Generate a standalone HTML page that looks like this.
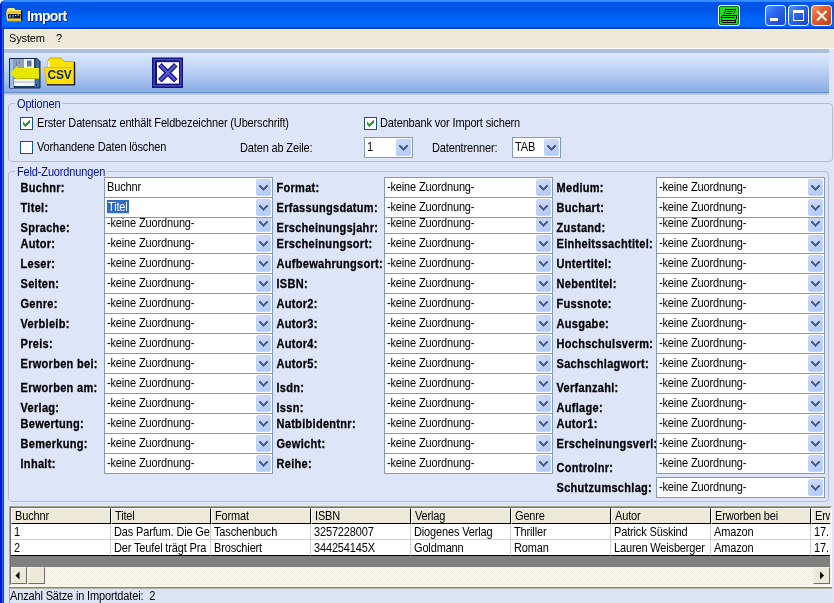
<!DOCTYPE html>
<html><head><meta charset="utf-8">
<style>
*{margin:0;padding:0;box-sizing:border-box}
body{will-change:transform}
html,body{width:834px;height:603px;overflow:hidden;background:#DEE5F9;font-family:"Liberation Sans",sans-serif;font-size:11px;color:#000;position:relative}
.abs{position:absolute}
#title{position:absolute;left:0;top:0;width:834px;height:29px;
 background:linear-gradient(180deg,#3D95FF 0px,#2D88FB 1.5px,#0058EE 2.5px,#0053E4 6px,#0056EA 12px,#0064FA 18px,#0068FF 24px,#0066FC 27px,#0038C8 28px,#0030B8 29px);border-top-left-radius:5px}
#ttext{position:absolute;left:27px;top:8px;font-size:14px;font-weight:bold;color:#fff;text-shadow:1px 1px 0 #0A1E8A;letter-spacing:-0.7px}
#lframe{position:absolute;left:0;top:29px;width:5px;height:574px;background:linear-gradient(90deg,#0012CC 0,#0018D4 1.5px,#2A6AF4 2px,#2262F0 2.6px,#1448CC 3.2px,#1448CC 4px,#D4E8FC 4px)}
#menu{position:absolute;left:4px;top:29px;width:830px;height:19px;background:#ECE9D8;border-top:1px solid #F4F2EA}
#menu span{position:absolute;top:2px;line-height:13px;letter-spacing:-0.15px}
#mline{position:absolute;left:4px;top:48px;width:830px;height:1px;background:#FAFAFA}
#tband{position:absolute;left:4px;top:49px;width:825px;height:4px;background:#AEBFDA}
#toolbar{position:absolute;left:4px;top:53px;width:825px;height:39px;background:linear-gradient(180deg,#DCE8FB 0px,#C7D9F7 12px,#A9C4EF 26px,#86ABE3 39px)}
#tbline{position:absolute;left:4px;top:92px;width:825px;height:1px;background:#6A92CB}
#tbline2{position:absolute;left:4px;top:93px;width:825px;height:1px;background:#A6BEE5}
#tbline3{position:absolute;left:4px;top:94px;width:825px;height:1px;background:#BFCADC}
#tbright{position:absolute;left:829px;top:49px;width:5px;height:46px;background:#DEE5F9}
.grp{position:absolute;border:1px solid #B8BCC6;border-radius:4px}
.gcap{position:absolute;color:#0010A0;background:#DEE5F9;padding:0 2px 0 2px;letter-spacing:-0.15px;line-height:13px;transform:scaleY(1.1);transform-origin:0 10px}
.n{position:absolute;white-space:nowrap;letter-spacing:-0.15px;line-height:13px;transform:scaleY(1.1);transform-origin:0 10px}
.chk{position:absolute;width:13px;height:13px;border:1px solid #1C5180;background:#FDFDFB}
.chk svg{position:absolute;left:0;top:0}
.lb{position:absolute;font-weight:bold;-webkit-text-stroke:0.25px #000;white-space:nowrap;letter-spacing:0.3px;line-height:13px;transform:scaleY(1.1);transform-origin:0 10px}
.cb{position:absolute;height:21px;border:1px solid #7F9DB9;background:#fff}
.ct{position:absolute;left:2px;top:3px;white-space:nowrap;letter-spacing:-0.15px;line-height:13px;transform:scaleY(1.1);transform-origin:0 10px}
.sel{background:#316AC5;color:#fff;padding:0 1px}
.bt{position:absolute;right:1px;top:1px;width:15px;height:17px;border-radius:2px;background:linear-gradient(160deg,#D2DDF6 0%,#C0D2F6 45%,#AFCBFA 100%);border:1px solid #C2D2F2}
.bt svg{position:absolute;left:2px;top:5px}
#grid{position:absolute;left:9px;top:506px;width:823px;height:80px;border-top:1px solid #ACA899;border-left:1px solid #ACA899;border-bottom:1px solid #fff;border-right:1px solid #fff;background:#808080;overflow:hidden}
#gin{position:absolute;left:0;top:0;right:0;bottom:0;border-top:1px solid #716F64;border-left:1px solid #716F64;border-bottom:1px solid #F1EFE2;border-right:1px solid #F1EFE2;overflow:hidden}
.gh{position:absolute;top:0;height:16px;background:#ECE9D8;border-left:1px solid #fff;border-top:1px solid #fff;border-right:1px solid #000;border-bottom:1px solid #000;overflow:hidden}
.gh span{position:absolute;left:3px;top:1px;white-space:nowrap;letter-spacing:-0.15px;line-height:13px;transform:scaleY(1.1);transform-origin:0 10px}
.gc span{position:absolute;left:3px;top:2px;white-space:nowrap;letter-spacing:-0.15px;line-height:13px;transform:scaleY(1.1);transform-origin:0 10px}
.gc{position:absolute;height:16px;background:#fff;border-right:1px solid #D4D0C8;border-bottom:1px solid #D4D0C8;overflow:hidden}
#hs{position:absolute;left:0;top:59px;width:819px;height:17px;background:repeating-conic-gradient(#FFFFFF 0 25%,#EAE8DC 0 50%) 0 0/2px 2px}
.sbb{position:absolute;top:0;width:16px;height:17px;background:#ECE9D8;border-left:1px solid #F1EFE2;border-top:1px solid #F1EFE2;border-right:1px solid #716F64;border-bottom:1px solid #716F64}
#sband{position:absolute;left:9px;top:586px;width:823px;height:1px;background:#F4F2E8}
#status{position:absolute;left:9px;top:587px;width:823px;height:16px;border-top:2px solid #8A887A;border-left:1px solid #ACA899;background:#DCE4F6}
#status:before{content:"";position:absolute;left:0;right:0;top:-1px;height:1px;background:#B4B2A6}
</style></head><body>
<div class="abs" style="left:0;top:0;width:6px;height:6px;background:#E8ECF4"></div>
<div id="title"></div>
<div class="abs" style="left:0;top:4px;width:2px;height:25px;background:linear-gradient(90deg,#0818B8,#0A2ED0)"></div>
<svg class="abs" style="left:0;top:0" width="30" height="30" viewBox="0 0 30 30">
 <path d="M6.5 12 L7.5 9 Q8 8 9 8 L14 8 L15.5 10 L21 10 L21 12Z" fill="#FFE86A"/>
 <rect x="7" y="9" width="1.5" height="3" fill="#FFFFFF"/>
 <path d="M6 11.5 L21 11.5 L21 21 L7 21 Z" fill="#F8DC30"/>
 <rect x="6" y="11.5" width="15" height="1" fill="#D8A818"/>
 <rect x="21" y="11" width="1.2" height="10.5" fill="#000"/>
 <rect x="7" y="20.5" width="15" height="1" fill="#C89810"/>
 <rect x="8" y="14" width="12.5" height="4.5" fill="#101A40"/>
 <rect x="9.5" y="15" width="1" height="2.5" fill="#E8F0FF"/>
 <rect x="12.5" y="15" width="1" height="1" fill="#E8F0FF"/>
 <rect x="12.5" y="16.5" width="1" height="1" fill="#E8F0FF"/>
 <rect x="15" y="15" width="1.2" height="1" fill="#F8F0A0"/>
 <rect x="17.5" y="14.5" width="1.5" height="1" fill="#F8F0A0"/>
</svg>
<div id="ttext">Import</div>
<svg class="abs" style="left:0;top:0" width="834" height="30" viewBox="0 0 834 30">
 <rect x="718" y="5" width="22" height="21" rx="3" fill="#fff"/>
 <rect x="719" y="6" width="20" height="19" rx="2" fill="#0B6A0B"/>
 <rect x="720" y="7" width="18" height="17" rx="1" fill="#18E018"/>
 <path d="M725 9h11v1h-11zM725 10h1v1h-1zM725 11h1v1h-1zM724 12h1v1h-1zM724 13h1v1h-1zM735 10h1v1h-1zM734 11h1v1h-1zM734 12h1v1h-1zM733 13h1v1h-1zM727 11h6v1h-6zM726 13h6v1h-6zM722 15h15v1h-15zM721 16h1v6h-1zM722 17h13v1h-13zM722 20h13v1h-13zM722 22h14v1h-14zM736 16h1v3h-1zM735 19h1v1h-1zM735 20h1v1h-1zM735 21h1v1h-1z" fill="#000" shape-rendering="crispEdges"/>
 <rect x="735" y="17" width="1" height="1" fill="#18E018"/>
 <defs>
  <linearGradient id="bb" x1="0" y1="0" x2="1" y2="1"><stop offset="0" stop-color="#5A9AFF"/><stop offset="0.35" stop-color="#2E6AF0"/><stop offset="1" stop-color="#1A46C8"/></linearGradient>
  <linearGradient id="rb" x1="0" y1="0" x2="1" y2="1"><stop offset="0" stop-color="#F4986A"/><stop offset="0.4" stop-color="#E0602E"/><stop offset="1" stop-color="#C0401A"/></linearGradient>
 </defs>
 <rect x="765.5" y="5.5" width="20" height="20" rx="3" fill="url(#bb)" stroke="#fff" stroke-width="1"/>
 <rect x="770" y="18" width="8" height="3" fill="#fff"/>
 <rect x="788.5" y="5.5" width="20" height="20" rx="3" fill="url(#bb)" stroke="#fff" stroke-width="1"/>
 <rect x="793" y="10" width="11" height="3" fill="#fff"/>
 <rect x="793.5" y="12.5" width="10" height="8" fill="none" stroke="#fff" stroke-width="1"/>
 <rect x="811.5" y="5.5" width="20" height="20" rx="3" fill="url(#rb)" stroke="#fff" stroke-width="1"/>
 <path d="M817 11 L826.5 20.5 M826.5 11 L817 20.5" stroke="#fff" stroke-width="2.1"/>
</svg>
<div id="lframe"></div>
<div id="menu"><span style="left:5px">System</span><span style="left:52px">?</span></div>
<div id="mline"></div>
<div id="tband"></div>
<div id="toolbar"></div>
<div id="tbline"></div><div id="tbline2"></div><div id="tbline3"></div>

<!-- toolbar icons -->
<svg class="abs" style="left:0;top:50px" width="200" height="45" viewBox="0 50 200 45">
 <!-- floppy at 9,58 size 31x30 -->
 <path d="M9.5 58.5 L37 58.5 L40 61.5 L40 88 L9.5 88Z" fill="#3D6C9C" stroke="#16264A" stroke-width="1"/>
 <rect x="10" y="59" width="3.5" height="29" fill="#9EC0E2"/>
 <rect x="13.5" y="59" width="10.5" height="9.5" fill="#8DA3BD"/>
 <rect x="16" y="61" width="1" height="5" fill="#6A7E98"/><rect x="19" y="61" width="1" height="3" fill="#6A7E98"/>
 <rect x="24" y="59" width="10" height="9.5" fill="#F2F2F2"/>
 <rect x="27" y="60.5" width="4.5" height="6" fill="#5A7898"/>
 <rect x="34" y="59" width="2" height="9.5" fill="#2C4A70"/>
 <rect x="14" y="79" width="20.5" height="7" fill="#F4F6F8"/>
 <rect x="14" y="81.5" width="20.5" height="1" fill="#A8B4C4"/>
 <rect x="14" y="86" width="20.5" height="2" fill="#1E3A60"/>
 <rect x="36" y="84" width="1" height="2" fill="#102040"/>
 <path d="M10 73 L17.5 65.5 L17.5 68 L39 68 L39 78.5 L17.5 78.5 L17.5 81 Z" fill="#E6E600"/>
 <path d="M17.5 78.5 L39 78.5" stroke="#B8B800" stroke-width="1"/>
 <!-- CSV folder -->
 <path d="M48 67 L48 60 L50 58 L61 58 L64 61.5 L74.5 61.5 L74.5 84 L48 84Z" fill="#FFE300" stroke="#C89A00" stroke-width="0.8"/>
 <rect x="48" y="61" width="1.5" height="6" fill="#fff"/>
 <path d="M74.5 62 L74.5 84.5" stroke="#101010" stroke-width="1.4"/>
 <path d="M44 67.5 L73.5 67.5 L73.5 84.5 L47 84.5 Z" fill="#FFE000" stroke="#E0A800" stroke-width="0.8"/>
 <path d="M47 84.8 L75 84.8" stroke="#101010" stroke-width="1.3"/>
 <text x="59.5" y="78.6" font-family="Liberation Sans" font-weight="bold" font-size="12" fill="#0A2A5A" text-anchor="middle" letter-spacing="-0.3">CSV</text>
 <!-- X box -->
 <rect x="152" y="57.5" width="31" height="30.5" fill="#12127C"/>
 <rect x="154.1" y="59.6" width="26.8" height="26.3" fill="none" stroke="#4A4AC4" stroke-width="1.4"/>
 <rect x="157" y="62.2" width="22" height="21.4" fill="#fff"/>
 <path d="M159.8 64.8 L175.8 80.8 M175.8 64.8 L159.8 80.8" stroke="#16168A" stroke-width="5"/>
 <path d="M160.3 65.3 L175.3 80.3 M175.3 65.3 L160.3 80.3" stroke="#5C5CD2" stroke-width="2.2"/>
</svg>
<!-- Optionen group -->
<div class="grp" style="left:8px;top:103px;width:825px;height:59px"></div>
<div class="gcap" style="left:15px;top:98px">Optionen</div>
<div class="chk" style="left:20px;top:117px"><svg width="7" height="7" viewBox="0 0 7 7" shape-rendering="crispEdges" style="left:2px;top:2px"><path d="M0 2h1v3h-1zM1 3h1v3h-1zM2 4h1v3h-1zM3 3h1v3h-1zM4 2h1v3h-1zM5 1h1v3h-1zM6 0h1v3h-1z" fill="#21A121"/></svg></div>
<div class="n" style="left:37px;top:117px">Erster Datensatz enthält Feldbezeichner (Uberschrift)</div>
<div class="chk" style="left:20px;top:141px"></div>
<div class="n" style="left:37px;top:141px">Vorhandene Daten löschen</div>
<div class="chk" style="left:364px;top:117px"><svg width="7" height="7" viewBox="0 0 7 7" shape-rendering="crispEdges" style="left:2px;top:2px"><path d="M0 2h1v3h-1zM1 3h1v3h-1zM2 4h1v3h-1zM3 3h1v3h-1zM4 2h1v3h-1zM5 1h1v3h-1zM6 0h1v3h-1z" fill="#21A121"/></svg></div>
<div class="n" style="left:380px;top:117px">Datenbank vor Import sichern</div>
<div class="n" style="left:240px;top:142px">Daten ab Zeile:</div>
<div class="cb" style="left:364px;top:137px;width:49px"><span class="ct">1</span><div class="bt"><svg width="9" height="6" viewBox="0 0 9 6" shape-rendering="crispEdges"><path d="M0 0h2v1h-2zM7 0h2v1h-2zM0 1h3v1h-3zM6 1h3v1h-3zM1 2h3v1h-3zM5 2h3v1h-3zM2 3h5v1h-5zM3 4h3v1h-3zM4 5h1v1h-1z" fill="#4D6185"/></svg></div></div>
<div class="n" style="left:432px;top:142px">Datentrenner:</div>
<div class="cb" style="left:512px;top:137px;width:49px"><span class="ct">TAB</span><div class="bt"><svg width="9" height="6" viewBox="0 0 9 6" shape-rendering="crispEdges"><path d="M0 0h2v1h-2zM7 0h2v1h-2zM0 1h3v1h-3zM6 1h3v1h-3zM1 2h3v1h-3zM5 2h3v1h-3zM2 3h5v1h-5zM3 4h3v1h-3zM4 5h1v1h-1z" fill="#4D6185"/></svg></div></div>

<!-- Feld group -->
<div class="grp" style="left:8px;top:171px;width:821px;height:331px"></div>
<div class="gcap" style="left:15px;top:166px">Feld-Zuordnungen</div>
<div class="lb" style="left:20.5px;top:182px">Buchnr:</div>
<div class="lb" style="left:20.5px;top:202px">Titel:</div>
<div class="lb" style="left:20.5px;top:222px">Sprache:</div>
<div class="lb" style="left:20.5px;top:238px">Autor:</div>
<div class="lb" style="left:20.5px;top:258px">Leser:</div>
<div class="lb" style="left:20.5px;top:278px">Seiten:</div>
<div class="lb" style="left:20.5px;top:298px">Genre:</div>
<div class="lb" style="left:20.5px;top:318px">Verbleib:</div>
<div class="lb" style="left:20.5px;top:338px">Preis:</div>
<div class="lb" style="left:20.5px;top:358px">Erworben bei:</div>
<div class="lb" style="left:20.5px;top:382px">Erworben am:</div>
<div class="lb" style="left:20.5px;top:402px">Verlag:</div>
<div class="lb" style="left:20.5px;top:418px">Bewertung:</div>
<div class="lb" style="left:20.5px;top:438px">Bemerkung:</div>
<div class="lb" style="left:20.5px;top:458px">Inhalt:</div>
<div class="lb" style="left:276.5px;top:182px">Format:</div>
<div class="lb" style="left:276.5px;top:202px">Erfassungsdatum:</div>
<div class="lb" style="left:276.5px;top:222px">Erscheinungsjahr:</div>
<div class="lb" style="left:276.5px;top:238px">Erscheinungsort:</div>
<div class="lb" style="left:276.5px;top:258px">Aufbewahrungsort:</div>
<div class="lb" style="left:276.5px;top:278px">ISBN:</div>
<div class="lb" style="left:276.5px;top:298px">Autor2:</div>
<div class="lb" style="left:276.5px;top:318px">Autor3:</div>
<div class="lb" style="left:276.5px;top:338px">Autor4:</div>
<div class="lb" style="left:276.5px;top:358px">Autor5:</div>
<div class="lb" style="left:276.5px;top:382px">Isdn:</div>
<div class="lb" style="left:276.5px;top:402px">Issn:</div>
<div class="lb" style="left:276.5px;top:418px">Natbibidentnr:</div>
<div class="lb" style="left:276.5px;top:438px">Gewicht:</div>
<div class="lb" style="left:276.5px;top:458px">Reihe:</div>
<div class="lb" style="left:556.5px;top:182px">Medium:</div>
<div class="lb" style="left:556.5px;top:202px">Buchart:</div>
<div class="lb" style="left:556.5px;top:222px">Zustand:</div>
<div class="lb" style="left:556.5px;top:238px">Einheitssachtitel:</div>
<div class="lb" style="left:556.5px;top:258px">Untertitel:</div>
<div class="lb" style="left:556.5px;top:278px">Nebentitel:</div>
<div class="lb" style="left:556.5px;top:298px">Fussnote:</div>
<div class="lb" style="left:556.5px;top:318px">Ausgabe:</div>
<div class="lb" style="left:556.5px;top:338px">Hochschulsverm:</div>
<div class="lb" style="left:556.5px;top:358px">Sachschlagwort:</div>
<div class="lb" style="left:556.5px;top:382px">Verfanzahl:</div>
<div class="lb" style="left:556.5px;top:402px">Auflage:</div>
<div class="lb" style="left:556.5px;top:418px">Autor1:</div>
<div class="lb" style="left:556.5px;top:438px">Erscheinungsverl:</div>
<div class="lb" style="left:556.5px;top:462px">Controlnr:</div>
<div class="lb" style="left:556.5px;top:482px">Schutzumschlag:</div>
<div class="cb" style="left:104px;top:177px;width:169px;z-index:1"><span class="ct">Buchnr</span><div class="bt"><svg width="9" height="6" viewBox="0 0 9 6" shape-rendering="crispEdges"><path d="M0 0h2v1h-2zM7 0h2v1h-2zM0 1h3v1h-3zM6 1h3v1h-3zM1 2h3v1h-3zM5 2h3v1h-3zM2 3h5v1h-5zM3 4h3v1h-3zM4 5h1v1h-1z" fill="#4D6185"/></svg></div></div>
<div class="cb" style="left:104px;top:197px;width:169px;z-index:2"><span class="ct"><span class="sel">Titel</span></span><div class="bt"><svg width="9" height="6" viewBox="0 0 9 6" shape-rendering="crispEdges"><path d="M0 0h2v1h-2zM7 0h2v1h-2zM0 1h3v1h-3zM6 1h3v1h-3zM1 2h3v1h-3zM5 2h3v1h-3zM2 3h5v1h-5zM3 4h3v1h-3zM4 5h1v1h-1z" fill="#4D6185"/></svg></div></div>
<div class="cb" style="left:104px;top:213px;width:169px;z-index:1"><span class="ct">-keine Zuordnung-</span><div class="bt"><svg width="9" height="6" viewBox="0 0 9 6" shape-rendering="crispEdges"><path d="M0 0h2v1h-2zM7 0h2v1h-2zM0 1h3v1h-3zM6 1h3v1h-3zM1 2h3v1h-3zM5 2h3v1h-3zM2 3h5v1h-5zM3 4h3v1h-3zM4 5h1v1h-1z" fill="#4D6185"/></svg></div></div>
<div class="cb" style="left:104px;top:233px;width:169px;z-index:4"><span class="ct">-keine Zuordnung-</span><div class="bt"><svg width="9" height="6" viewBox="0 0 9 6" shape-rendering="crispEdges"><path d="M0 0h2v1h-2zM7 0h2v1h-2zM0 1h3v1h-3zM6 1h3v1h-3zM1 2h3v1h-3zM5 2h3v1h-3zM2 3h5v1h-5zM3 4h3v1h-3zM4 5h1v1h-1z" fill="#4D6185"/></svg></div></div>
<div class="cb" style="left:104px;top:253px;width:169px;z-index:5"><span class="ct">-keine Zuordnung-</span><div class="bt"><svg width="9" height="6" viewBox="0 0 9 6" shape-rendering="crispEdges"><path d="M0 0h2v1h-2zM7 0h2v1h-2zM0 1h3v1h-3zM6 1h3v1h-3zM1 2h3v1h-3zM5 2h3v1h-3zM2 3h5v1h-5zM3 4h3v1h-3zM4 5h1v1h-1z" fill="#4D6185"/></svg></div></div>
<div class="cb" style="left:104px;top:273px;width:169px;z-index:6"><span class="ct">-keine Zuordnung-</span><div class="bt"><svg width="9" height="6" viewBox="0 0 9 6" shape-rendering="crispEdges"><path d="M0 0h2v1h-2zM7 0h2v1h-2zM0 1h3v1h-3zM6 1h3v1h-3zM1 2h3v1h-3zM5 2h3v1h-3zM2 3h5v1h-5zM3 4h3v1h-3zM4 5h1v1h-1z" fill="#4D6185"/></svg></div></div>
<div class="cb" style="left:104px;top:293px;width:169px;z-index:7"><span class="ct">-keine Zuordnung-</span><div class="bt"><svg width="9" height="6" viewBox="0 0 9 6" shape-rendering="crispEdges"><path d="M0 0h2v1h-2zM7 0h2v1h-2zM0 1h3v1h-3zM6 1h3v1h-3zM1 2h3v1h-3zM5 2h3v1h-3zM2 3h5v1h-5zM3 4h3v1h-3zM4 5h1v1h-1z" fill="#4D6185"/></svg></div></div>
<div class="cb" style="left:104px;top:313px;width:169px;z-index:8"><span class="ct">-keine Zuordnung-</span><div class="bt"><svg width="9" height="6" viewBox="0 0 9 6" shape-rendering="crispEdges"><path d="M0 0h2v1h-2zM7 0h2v1h-2zM0 1h3v1h-3zM6 1h3v1h-3zM1 2h3v1h-3zM5 2h3v1h-3zM2 3h5v1h-5zM3 4h3v1h-3zM4 5h1v1h-1z" fill="#4D6185"/></svg></div></div>
<div class="cb" style="left:104px;top:333px;width:169px;z-index:9"><span class="ct">-keine Zuordnung-</span><div class="bt"><svg width="9" height="6" viewBox="0 0 9 6" shape-rendering="crispEdges"><path d="M0 0h2v1h-2zM7 0h2v1h-2zM0 1h3v1h-3zM6 1h3v1h-3zM1 2h3v1h-3zM5 2h3v1h-3zM2 3h5v1h-5zM3 4h3v1h-3zM4 5h1v1h-1z" fill="#4D6185"/></svg></div></div>
<div class="cb" style="left:104px;top:353px;width:169px;z-index:10"><span class="ct">-keine Zuordnung-</span><div class="bt"><svg width="9" height="6" viewBox="0 0 9 6" shape-rendering="crispEdges"><path d="M0 0h2v1h-2zM7 0h2v1h-2zM0 1h3v1h-3zM6 1h3v1h-3zM1 2h3v1h-3zM5 2h3v1h-3zM2 3h5v1h-5zM3 4h3v1h-3zM4 5h1v1h-1z" fill="#4D6185"/></svg></div></div>
<div class="cb" style="left:104px;top:373px;width:169px;z-index:11"><span class="ct">-keine Zuordnung-</span><div class="bt"><svg width="9" height="6" viewBox="0 0 9 6" shape-rendering="crispEdges"><path d="M0 0h2v1h-2zM7 0h2v1h-2zM0 1h3v1h-3zM6 1h3v1h-3zM1 2h3v1h-3zM5 2h3v1h-3zM2 3h5v1h-5zM3 4h3v1h-3zM4 5h1v1h-1z" fill="#4D6185"/></svg></div></div>
<div class="cb" style="left:104px;top:393px;width:169px;z-index:12"><span class="ct">-keine Zuordnung-</span><div class="bt"><svg width="9" height="6" viewBox="0 0 9 6" shape-rendering="crispEdges"><path d="M0 0h2v1h-2zM7 0h2v1h-2zM0 1h3v1h-3zM6 1h3v1h-3zM1 2h3v1h-3zM5 2h3v1h-3zM2 3h5v1h-5zM3 4h3v1h-3zM4 5h1v1h-1z" fill="#4D6185"/></svg></div></div>
<div class="cb" style="left:104px;top:413px;width:169px;z-index:13"><span class="ct">-keine Zuordnung-</span><div class="bt"><svg width="9" height="6" viewBox="0 0 9 6" shape-rendering="crispEdges"><path d="M0 0h2v1h-2zM7 0h2v1h-2zM0 1h3v1h-3zM6 1h3v1h-3zM1 2h3v1h-3zM5 2h3v1h-3zM2 3h5v1h-5zM3 4h3v1h-3zM4 5h1v1h-1z" fill="#4D6185"/></svg></div></div>
<div class="cb" style="left:104px;top:433px;width:169px;z-index:14"><span class="ct">-keine Zuordnung-</span><div class="bt"><svg width="9" height="6" viewBox="0 0 9 6" shape-rendering="crispEdges"><path d="M0 0h2v1h-2zM7 0h2v1h-2zM0 1h3v1h-3zM6 1h3v1h-3zM1 2h3v1h-3zM5 2h3v1h-3zM2 3h5v1h-5zM3 4h3v1h-3zM4 5h1v1h-1z" fill="#4D6185"/></svg></div></div>
<div class="cb" style="left:104px;top:453px;width:169px;z-index:15"><span class="ct">-keine Zuordnung-</span><div class="bt"><svg width="9" height="6" viewBox="0 0 9 6" shape-rendering="crispEdges"><path d="M0 0h2v1h-2zM7 0h2v1h-2zM0 1h3v1h-3zM6 1h3v1h-3zM1 2h3v1h-3zM5 2h3v1h-3zM2 3h5v1h-5zM3 4h3v1h-3zM4 5h1v1h-1z" fill="#4D6185"/></svg></div></div>
<div class="cb" style="left:384px;top:177px;width:169px;z-index:1"><span class="ct">-keine Zuordnung-</span><div class="bt"><svg width="9" height="6" viewBox="0 0 9 6" shape-rendering="crispEdges"><path d="M0 0h2v1h-2zM7 0h2v1h-2zM0 1h3v1h-3zM6 1h3v1h-3zM1 2h3v1h-3zM5 2h3v1h-3zM2 3h5v1h-5zM3 4h3v1h-3zM4 5h1v1h-1z" fill="#4D6185"/></svg></div></div>
<div class="cb" style="left:384px;top:197px;width:169px;z-index:2"><span class="ct">-keine Zuordnung-</span><div class="bt"><svg width="9" height="6" viewBox="0 0 9 6" shape-rendering="crispEdges"><path d="M0 0h2v1h-2zM7 0h2v1h-2zM0 1h3v1h-3zM6 1h3v1h-3zM1 2h3v1h-3zM5 2h3v1h-3zM2 3h5v1h-5zM3 4h3v1h-3zM4 5h1v1h-1z" fill="#4D6185"/></svg></div></div>
<div class="cb" style="left:384px;top:213px;width:169px;z-index:1"><span class="ct">-keine Zuordnung-</span><div class="bt"><svg width="9" height="6" viewBox="0 0 9 6" shape-rendering="crispEdges"><path d="M0 0h2v1h-2zM7 0h2v1h-2zM0 1h3v1h-3zM6 1h3v1h-3zM1 2h3v1h-3zM5 2h3v1h-3zM2 3h5v1h-5zM3 4h3v1h-3zM4 5h1v1h-1z" fill="#4D6185"/></svg></div></div>
<div class="cb" style="left:384px;top:233px;width:169px;z-index:4"><span class="ct">-keine Zuordnung-</span><div class="bt"><svg width="9" height="6" viewBox="0 0 9 6" shape-rendering="crispEdges"><path d="M0 0h2v1h-2zM7 0h2v1h-2zM0 1h3v1h-3zM6 1h3v1h-3zM1 2h3v1h-3zM5 2h3v1h-3zM2 3h5v1h-5zM3 4h3v1h-3zM4 5h1v1h-1z" fill="#4D6185"/></svg></div></div>
<div class="cb" style="left:384px;top:253px;width:169px;z-index:5"><span class="ct">-keine Zuordnung-</span><div class="bt"><svg width="9" height="6" viewBox="0 0 9 6" shape-rendering="crispEdges"><path d="M0 0h2v1h-2zM7 0h2v1h-2zM0 1h3v1h-3zM6 1h3v1h-3zM1 2h3v1h-3zM5 2h3v1h-3zM2 3h5v1h-5zM3 4h3v1h-3zM4 5h1v1h-1z" fill="#4D6185"/></svg></div></div>
<div class="cb" style="left:384px;top:273px;width:169px;z-index:6"><span class="ct">-keine Zuordnung-</span><div class="bt"><svg width="9" height="6" viewBox="0 0 9 6" shape-rendering="crispEdges"><path d="M0 0h2v1h-2zM7 0h2v1h-2zM0 1h3v1h-3zM6 1h3v1h-3zM1 2h3v1h-3zM5 2h3v1h-3zM2 3h5v1h-5zM3 4h3v1h-3zM4 5h1v1h-1z" fill="#4D6185"/></svg></div></div>
<div class="cb" style="left:384px;top:293px;width:169px;z-index:7"><span class="ct">-keine Zuordnung-</span><div class="bt"><svg width="9" height="6" viewBox="0 0 9 6" shape-rendering="crispEdges"><path d="M0 0h2v1h-2zM7 0h2v1h-2zM0 1h3v1h-3zM6 1h3v1h-3zM1 2h3v1h-3zM5 2h3v1h-3zM2 3h5v1h-5zM3 4h3v1h-3zM4 5h1v1h-1z" fill="#4D6185"/></svg></div></div>
<div class="cb" style="left:384px;top:313px;width:169px;z-index:8"><span class="ct">-keine Zuordnung-</span><div class="bt"><svg width="9" height="6" viewBox="0 0 9 6" shape-rendering="crispEdges"><path d="M0 0h2v1h-2zM7 0h2v1h-2zM0 1h3v1h-3zM6 1h3v1h-3zM1 2h3v1h-3zM5 2h3v1h-3zM2 3h5v1h-5zM3 4h3v1h-3zM4 5h1v1h-1z" fill="#4D6185"/></svg></div></div>
<div class="cb" style="left:384px;top:333px;width:169px;z-index:9"><span class="ct">-keine Zuordnung-</span><div class="bt"><svg width="9" height="6" viewBox="0 0 9 6" shape-rendering="crispEdges"><path d="M0 0h2v1h-2zM7 0h2v1h-2zM0 1h3v1h-3zM6 1h3v1h-3zM1 2h3v1h-3zM5 2h3v1h-3zM2 3h5v1h-5zM3 4h3v1h-3zM4 5h1v1h-1z" fill="#4D6185"/></svg></div></div>
<div class="cb" style="left:384px;top:353px;width:169px;z-index:10"><span class="ct">-keine Zuordnung-</span><div class="bt"><svg width="9" height="6" viewBox="0 0 9 6" shape-rendering="crispEdges"><path d="M0 0h2v1h-2zM7 0h2v1h-2zM0 1h3v1h-3zM6 1h3v1h-3zM1 2h3v1h-3zM5 2h3v1h-3zM2 3h5v1h-5zM3 4h3v1h-3zM4 5h1v1h-1z" fill="#4D6185"/></svg></div></div>
<div class="cb" style="left:384px;top:373px;width:169px;z-index:11"><span class="ct">-keine Zuordnung-</span><div class="bt"><svg width="9" height="6" viewBox="0 0 9 6" shape-rendering="crispEdges"><path d="M0 0h2v1h-2zM7 0h2v1h-2zM0 1h3v1h-3zM6 1h3v1h-3zM1 2h3v1h-3zM5 2h3v1h-3zM2 3h5v1h-5zM3 4h3v1h-3zM4 5h1v1h-1z" fill="#4D6185"/></svg></div></div>
<div class="cb" style="left:384px;top:393px;width:169px;z-index:12"><span class="ct">-keine Zuordnung-</span><div class="bt"><svg width="9" height="6" viewBox="0 0 9 6" shape-rendering="crispEdges"><path d="M0 0h2v1h-2zM7 0h2v1h-2zM0 1h3v1h-3zM6 1h3v1h-3zM1 2h3v1h-3zM5 2h3v1h-3zM2 3h5v1h-5zM3 4h3v1h-3zM4 5h1v1h-1z" fill="#4D6185"/></svg></div></div>
<div class="cb" style="left:384px;top:413px;width:169px;z-index:13"><span class="ct">-keine Zuordnung-</span><div class="bt"><svg width="9" height="6" viewBox="0 0 9 6" shape-rendering="crispEdges"><path d="M0 0h2v1h-2zM7 0h2v1h-2zM0 1h3v1h-3zM6 1h3v1h-3zM1 2h3v1h-3zM5 2h3v1h-3zM2 3h5v1h-5zM3 4h3v1h-3zM4 5h1v1h-1z" fill="#4D6185"/></svg></div></div>
<div class="cb" style="left:384px;top:433px;width:169px;z-index:14"><span class="ct">-keine Zuordnung-</span><div class="bt"><svg width="9" height="6" viewBox="0 0 9 6" shape-rendering="crispEdges"><path d="M0 0h2v1h-2zM7 0h2v1h-2zM0 1h3v1h-3zM6 1h3v1h-3zM1 2h3v1h-3zM5 2h3v1h-3zM2 3h5v1h-5zM3 4h3v1h-3zM4 5h1v1h-1z" fill="#4D6185"/></svg></div></div>
<div class="cb" style="left:384px;top:453px;width:169px;z-index:15"><span class="ct">-keine Zuordnung-</span><div class="bt"><svg width="9" height="6" viewBox="0 0 9 6" shape-rendering="crispEdges"><path d="M0 0h2v1h-2zM7 0h2v1h-2zM0 1h3v1h-3zM6 1h3v1h-3zM1 2h3v1h-3zM5 2h3v1h-3zM2 3h5v1h-5zM3 4h3v1h-3zM4 5h1v1h-1z" fill="#4D6185"/></svg></div></div>
<div class="cb" style="left:656px;top:177px;width:169px;z-index:1"><span class="ct">-keine Zuordnung-</span><div class="bt"><svg width="9" height="6" viewBox="0 0 9 6" shape-rendering="crispEdges"><path d="M0 0h2v1h-2zM7 0h2v1h-2zM0 1h3v1h-3zM6 1h3v1h-3zM1 2h3v1h-3zM5 2h3v1h-3zM2 3h5v1h-5zM3 4h3v1h-3zM4 5h1v1h-1z" fill="#4D6185"/></svg></div></div>
<div class="cb" style="left:656px;top:197px;width:169px;z-index:2"><span class="ct">-keine Zuordnung-</span><div class="bt"><svg width="9" height="6" viewBox="0 0 9 6" shape-rendering="crispEdges"><path d="M0 0h2v1h-2zM7 0h2v1h-2zM0 1h3v1h-3zM6 1h3v1h-3zM1 2h3v1h-3zM5 2h3v1h-3zM2 3h5v1h-5zM3 4h3v1h-3zM4 5h1v1h-1z" fill="#4D6185"/></svg></div></div>
<div class="cb" style="left:656px;top:213px;width:169px;z-index:1"><span class="ct">-keine Zuordnung-</span><div class="bt"><svg width="9" height="6" viewBox="0 0 9 6" shape-rendering="crispEdges"><path d="M0 0h2v1h-2zM7 0h2v1h-2zM0 1h3v1h-3zM6 1h3v1h-3zM1 2h3v1h-3zM5 2h3v1h-3zM2 3h5v1h-5zM3 4h3v1h-3zM4 5h1v1h-1z" fill="#4D6185"/></svg></div></div>
<div class="cb" style="left:656px;top:233px;width:169px;z-index:4"><span class="ct">-keine Zuordnung-</span><div class="bt"><svg width="9" height="6" viewBox="0 0 9 6" shape-rendering="crispEdges"><path d="M0 0h2v1h-2zM7 0h2v1h-2zM0 1h3v1h-3zM6 1h3v1h-3zM1 2h3v1h-3zM5 2h3v1h-3zM2 3h5v1h-5zM3 4h3v1h-3zM4 5h1v1h-1z" fill="#4D6185"/></svg></div></div>
<div class="cb" style="left:656px;top:253px;width:169px;z-index:5"><span class="ct">-keine Zuordnung-</span><div class="bt"><svg width="9" height="6" viewBox="0 0 9 6" shape-rendering="crispEdges"><path d="M0 0h2v1h-2zM7 0h2v1h-2zM0 1h3v1h-3zM6 1h3v1h-3zM1 2h3v1h-3zM5 2h3v1h-3zM2 3h5v1h-5zM3 4h3v1h-3zM4 5h1v1h-1z" fill="#4D6185"/></svg></div></div>
<div class="cb" style="left:656px;top:273px;width:169px;z-index:6"><span class="ct">-keine Zuordnung-</span><div class="bt"><svg width="9" height="6" viewBox="0 0 9 6" shape-rendering="crispEdges"><path d="M0 0h2v1h-2zM7 0h2v1h-2zM0 1h3v1h-3zM6 1h3v1h-3zM1 2h3v1h-3zM5 2h3v1h-3zM2 3h5v1h-5zM3 4h3v1h-3zM4 5h1v1h-1z" fill="#4D6185"/></svg></div></div>
<div class="cb" style="left:656px;top:293px;width:169px;z-index:7"><span class="ct">-keine Zuordnung-</span><div class="bt"><svg width="9" height="6" viewBox="0 0 9 6" shape-rendering="crispEdges"><path d="M0 0h2v1h-2zM7 0h2v1h-2zM0 1h3v1h-3zM6 1h3v1h-3zM1 2h3v1h-3zM5 2h3v1h-3zM2 3h5v1h-5zM3 4h3v1h-3zM4 5h1v1h-1z" fill="#4D6185"/></svg></div></div>
<div class="cb" style="left:656px;top:313px;width:169px;z-index:8"><span class="ct">-keine Zuordnung-</span><div class="bt"><svg width="9" height="6" viewBox="0 0 9 6" shape-rendering="crispEdges"><path d="M0 0h2v1h-2zM7 0h2v1h-2zM0 1h3v1h-3zM6 1h3v1h-3zM1 2h3v1h-3zM5 2h3v1h-3zM2 3h5v1h-5zM3 4h3v1h-3zM4 5h1v1h-1z" fill="#4D6185"/></svg></div></div>
<div class="cb" style="left:656px;top:333px;width:169px;z-index:9"><span class="ct">-keine Zuordnung-</span><div class="bt"><svg width="9" height="6" viewBox="0 0 9 6" shape-rendering="crispEdges"><path d="M0 0h2v1h-2zM7 0h2v1h-2zM0 1h3v1h-3zM6 1h3v1h-3zM1 2h3v1h-3zM5 2h3v1h-3zM2 3h5v1h-5zM3 4h3v1h-3zM4 5h1v1h-1z" fill="#4D6185"/></svg></div></div>
<div class="cb" style="left:656px;top:353px;width:169px;z-index:10"><span class="ct">-keine Zuordnung-</span><div class="bt"><svg width="9" height="6" viewBox="0 0 9 6" shape-rendering="crispEdges"><path d="M0 0h2v1h-2zM7 0h2v1h-2zM0 1h3v1h-3zM6 1h3v1h-3zM1 2h3v1h-3zM5 2h3v1h-3zM2 3h5v1h-5zM3 4h3v1h-3zM4 5h1v1h-1z" fill="#4D6185"/></svg></div></div>
<div class="cb" style="left:656px;top:373px;width:169px;z-index:11"><span class="ct">-keine Zuordnung-</span><div class="bt"><svg width="9" height="6" viewBox="0 0 9 6" shape-rendering="crispEdges"><path d="M0 0h2v1h-2zM7 0h2v1h-2zM0 1h3v1h-3zM6 1h3v1h-3zM1 2h3v1h-3zM5 2h3v1h-3zM2 3h5v1h-5zM3 4h3v1h-3zM4 5h1v1h-1z" fill="#4D6185"/></svg></div></div>
<div class="cb" style="left:656px;top:393px;width:169px;z-index:12"><span class="ct">-keine Zuordnung-</span><div class="bt"><svg width="9" height="6" viewBox="0 0 9 6" shape-rendering="crispEdges"><path d="M0 0h2v1h-2zM7 0h2v1h-2zM0 1h3v1h-3zM6 1h3v1h-3zM1 2h3v1h-3zM5 2h3v1h-3zM2 3h5v1h-5zM3 4h3v1h-3zM4 5h1v1h-1z" fill="#4D6185"/></svg></div></div>
<div class="cb" style="left:656px;top:413px;width:169px;z-index:13"><span class="ct">-keine Zuordnung-</span><div class="bt"><svg width="9" height="6" viewBox="0 0 9 6" shape-rendering="crispEdges"><path d="M0 0h2v1h-2zM7 0h2v1h-2zM0 1h3v1h-3zM6 1h3v1h-3zM1 2h3v1h-3zM5 2h3v1h-3zM2 3h5v1h-5zM3 4h3v1h-3zM4 5h1v1h-1z" fill="#4D6185"/></svg></div></div>
<div class="cb" style="left:656px;top:433px;width:169px;z-index:14"><span class="ct">-keine Zuordnung-</span><div class="bt"><svg width="9" height="6" viewBox="0 0 9 6" shape-rendering="crispEdges"><path d="M0 0h2v1h-2zM7 0h2v1h-2zM0 1h3v1h-3zM6 1h3v1h-3zM1 2h3v1h-3zM5 2h3v1h-3zM2 3h5v1h-5zM3 4h3v1h-3zM4 5h1v1h-1z" fill="#4D6185"/></svg></div></div>
<div class="cb" style="left:656px;top:453px;width:169px;z-index:15"><span class="ct">-keine Zuordnung-</span><div class="bt"><svg width="9" height="6" viewBox="0 0 9 6" shape-rendering="crispEdges"><path d="M0 0h2v1h-2zM7 0h2v1h-2zM0 1h3v1h-3zM6 1h3v1h-3zM1 2h3v1h-3zM5 2h3v1h-3zM2 3h5v1h-5zM3 4h3v1h-3zM4 5h1v1h-1z" fill="#4D6185"/></svg></div></div>
<div class="cb" style="left:656px;top:477px;width:169px;z-index:16"><span class="ct">-keine Zuordnung-</span><div class="bt"><svg width="9" height="6" viewBox="0 0 9 6" shape-rendering="crispEdges"><path d="M0 0h2v1h-2zM7 0h2v1h-2zM0 1h3v1h-3zM6 1h3v1h-3zM1 2h3v1h-3zM5 2h3v1h-3zM2 3h5v1h-5zM3 4h3v1h-3zM4 5h1v1h-1z" fill="#4D6185"/></svg></div></div>


<!-- grid -->
<div id="grid"><div id="gin">
<div class="gh" style="left:0px;width:100px"><span>Buchnr</span></div><div class="gc" style="left:0px;top:16px;width:100px"><span>1</span></div><div class="gc" style="left:0px;top:32px;width:100px;border-bottom-color:#000"><span>2</span></div><div class="gh" style="left:100px;width:100px"><span>Titel</span></div><div class="gc" style="left:100px;top:16px;width:100px"><span>Das Parfum. Die Ge</span></div><div class="gc" style="left:100px;top:32px;width:100px;border-bottom-color:#000"><span>Der Teufel trägt Pra</span></div><div class="gh" style="left:200px;width:100px"><span>Format</span></div><div class="gc" style="left:200px;top:16px;width:100px"><span>Taschenbuch</span></div><div class="gc" style="left:200px;top:32px;width:100px;border-bottom-color:#000"><span>Broschiert</span></div><div class="gh" style="left:300px;width:100px"><span>ISBN</span></div><div class="gc" style="left:300px;top:16px;width:100px"><span>3257228007</span></div><div class="gc" style="left:300px;top:32px;width:100px;border-bottom-color:#000"><span>344254145X</span></div><div class="gh" style="left:400px;width:100px"><span>Verlag</span></div><div class="gc" style="left:400px;top:16px;width:100px"><span>Diogenes Verlag</span></div><div class="gc" style="left:400px;top:32px;width:100px;border-bottom-color:#000"><span>Goldmann</span></div><div class="gh" style="left:500px;width:100px"><span>Genre</span></div><div class="gc" style="left:500px;top:16px;width:100px"><span>Thriller</span></div><div class="gc" style="left:500px;top:32px;width:100px;border-bottom-color:#000"><span>Roman</span></div><div class="gh" style="left:600px;width:100px"><span>Autor</span></div><div class="gc" style="left:600px;top:16px;width:100px"><span>Patrick Süskind</span></div><div class="gc" style="left:600px;top:32px;width:100px;border-bottom-color:#000"><span>Lauren Weisberger</span></div><div class="gh" style="left:700px;width:100px"><span>Erworben bei</span></div><div class="gc" style="left:700px;top:16px;width:100px"><span>Amazon</span></div><div class="gc" style="left:700px;top:32px;width:100px;border-bottom-color:#000"><span>Amazon</span></div><div class="gh" style="left:800px;width:100px"><span>Erworben am</span></div><div class="gc" style="left:800px;top:16px;width:100px"><span>17.</span></div><div class="gc" style="left:800px;top:32px;width:100px;border-bottom-color:#000"><span>17.</span></div>
<div id="hs">
 <div class="sbb" style="left:0"><svg width="14" height="15" viewBox="0 0 14 15" style="position:absolute;left:0;top:0"><path d="M3.5 7.5 L7.5 3.5 L7.5 11.5Z" fill="#000"/></svg></div>
 <div class="sbb" style="left:17px;width:17px"></div>
 <div class="sbb" style="left:802px;width:17px"><svg width="14" height="15" viewBox="0 0 14 15" style="position:absolute;left:0;top:0"><path d="M10 7.5 L6 3.5 L6 11.5Z" fill="#000"/></svg></div>
</div>
</div></div>
<div id="sband"></div><div id="status"><span class="n" style="left:0px;top:1px">Anzahl Sätze in Importdatei:&nbsp; 2</span></div>
</body></html>
